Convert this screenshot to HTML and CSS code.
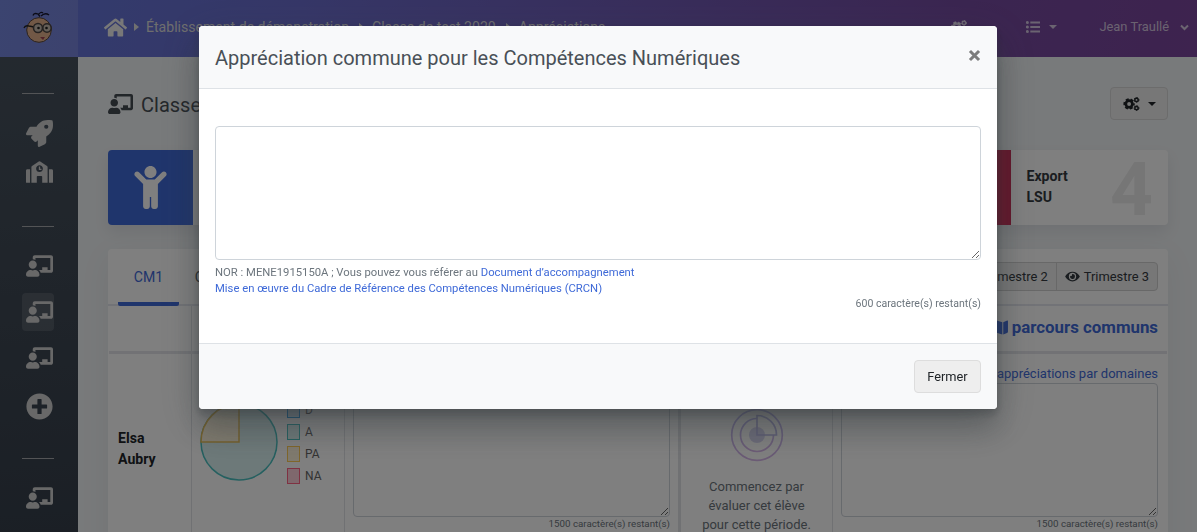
FILE: index.html
```html
<!DOCTYPE html>
<html lang="fr">
<head>
<meta charset="utf-8">
<title>Appréciations</title>
<link rel="stylesheet" href="styles.css">
</head>
<body>
<svg class="sprite" aria-hidden="true">
  <symbol id="teacher" viewBox="0 0 640 512"><path d="M208 352c-2.39 0-4.78.35-7.06 1.09C187.98 357.3 174.35 360 160 360c-14.35 0-27.98-2.7-40.95-6.91-2.28-.74-4.66-1.09-7.05-1.09C49.94 352-.33 402.48 0 464.62.14 490.88 21.73 512 48 512h224c26.27 0 47.86-21.12 48-47.38.33-62.14-49.94-112.62-112-112.62zm-48-32c53.02 0 96-42.98 96-96s-42.98-96-96-96-96 42.98-96 96 42.98 96 96 96zM592 0H208c-26.47 0-48 22.25-48 49.59V96c23.42 0 45.1 6.78 64 17.8V64h352v288h-64v-64H384v64h-76.24c19.1 16.69 33.12 38.73 39.69 64H592c26.47 0 48-22.25 48-49.59V49.59C640 22.25 618.47 0 592 0z"/></symbol>
  <symbol id="rocket" viewBox="0 0 512 512"><path d="M505.12 19.094c-1.19-5.53-6.658-11-12.207-12.188C460.716 0 435.507 0 410.407 0 307.175 0 245.27 55.203 199.052 128H94.838c-16.348.016-35.557 11.875-42.887 26.484L2.516 253.297A28.4 28.4 0 0 0 0 264a24 24 0 0 0 24.006 24h103.81l-22.474 22.469c-11.365 11.36-12.996 32.258 0 45.25l50.904 50.906c11.156 11.188 32.156 13.156 45.277 0l22.475-22.469V488a24 24 0 0 0 24.006 24 28.56 28.56 0 0 0 10.707-2.516l98.728-49.39c14.629-7.297 26.508-26.5 26.508-42.86V312.797c72.598-46.313 128.035-108.406 128.035-211.094.093-25.203.093-50.406-6.862-82.609zM384.04 168A40 40 0 1 1 424.05 128 40.02 40.02 0 0 1 384.04 168z"/></symbol>
  <symbol id="school" viewBox="0 0 640 512"><path d="M0 224v272c0 8.84 7.16 16 16 16h80V192H32c-17.67 0-32 14.33-32 32zm360-48h-24v-40c0-4.42-3.58-8-8-8h-16c-4.42 0-8 3.58-8 8v64c0 4.42 3.58 8 8 8h48c4.42 0 8-3.58 8-8v-16c0-4.42-3.58-8-8-8zm137.75-63.96l-160-106.67a32.02 32.02 0 0 0-35.5 0l-160 106.67A32.002 32.002 0 0 0 128 138.66V512h128V368c0-8.84 7.16-16 16-16h96c8.84 0 16 7.16 16 16v144h128V138.67c0-10.7-5.35-20.7-14.25-26.63zM320 256c-44.18 0-80-35.82-80-80s35.82-80 80-80 80 35.82 80 80-35.82 80-80 80zm288-64h-64v320h80c8.84 0 16-7.16 16-16V224c0-17.67-14.33-32-32-32z"/></symbol>
  <symbol id="plus" viewBox="0 0 512 512"><path d="M256 8C119 8 8 119 8 256s111 248 248 248 248-111 248-248S393 8 256 8zm144 276c0 6.6-5.4 12-12 12h-92v92c0 6.6-5.4 12-12 12h-56c-6.6 0-12-5.4-12-12v-92h-92c-6.6 0-12-5.4-12-12v-56c0-6.6 5.4-12 12-12h92v-92c0-6.6 5.4-12 12-12h56c6.6 0 12 5.4 12 12v92h92c6.6 0 12 5.4 12 12v56z"/></symbol>
  <symbol id="home" viewBox="0 0 576 512"><path d="M280.37 148.26L96 300.11V464a16 16 0 0 0 16 16l112.06-.29a16 16 0 0 0 15.92-16V368a16 16 0 0 1 16-16h64a16 16 0 0 1 16 16v95.64a16 16 0 0 0 16 16.05L464 480a16 16 0 0 0 16-16V300L295.67 148.26a12.19 12.19 0 0 0-15.3 0zM571.6 251.47L488 182.56V44.05a12 12 0 0 0-12-12h-56a12 12 0 0 0-12 12v72.61L318.47 43a48 48 0 0 0-61 0L4.34 251.47a12 12 0 0 0-1.6 16.9l25.5 31A12 12 0 0 0 45.15 301l235.22-193.74a12.19 12.19 0 0 1 15.3 0L530.9 301a12 12 0 0 0 16.9-1.6l25.5-31a12 12 0 0 0-1.7-16.93z"/></symbol>
  <symbol id="child" viewBox="0 0 384 512"><path d="M120 72c0-39.765 32.235-72 72-72s72 32.235 72 72c0 39.764-32.235 72-72 72s-72-32.236-72-72zm254.627 1.373c-12.496-12.497-32.758-12.497-45.254 0L242.745 160H141.254L54.627 73.373c-12.496-12.497-32.758-12.497-45.254 0-12.497 12.497-12.497 32.758 0 45.255L104 213.254V480c0 17.673 14.327 32 32 32h16c17.673 0 32-14.327 32-32V368h16v112c0 17.673 14.327 32 32 32h16c17.673 0 32-14.327 32-32V213.254l94.627-94.627c12.497-12.496 12.497-32.757 0-45.254z"/></symbol>
  <symbol id="eye" viewBox="0 0 576 512"><path d="M572.52 241.4C518.29 135.59 410.93 64 288 64S57.68 135.64 3.48 241.41a32.35 32.35 0 0 0 0 29.19C57.71 376.41 165.07 448 288 448s230.32-71.64 284.52-177.41a32.35 32.35 0 0 0 0-29.19zM288 400a144 144 0 1 1 144-144 143.93 143.93 0 0 1-144 144zm0-240a95.31 95.31 0 0 0-25.31 3.79 47.85 47.85 0 0 1-66.9 66.9A95.78 95.78 0 1 0 288 160z"/></symbol>
  <symbol id="cogs" viewBox="0 0 16 14"><g fill="none" stroke="currentColor"><circle cx="5.6" cy="7" r="3.3" stroke-width="2.700"/><circle cx="5.6" cy="7" r="4.700" stroke-width="2" stroke-dasharray="2.900 2.022" stroke-dashoffset="1.450"/><circle cx="13" cy="2.900" r="1.700" stroke-width="1.500"/><circle cx="13" cy="2.900" r="2.400" stroke-width="1" stroke-dasharray="1.500 1.013"/><circle cx="13" cy="11.100" r="1.700" stroke-width="1.500"/><circle cx="13" cy="11.100" r="2.400" stroke-width="1" stroke-dasharray="1.500 1.013"/></g></symbol>
  <symbol id="list" viewBox="0 0 14 12"><circle cx="1.4" cy="1.5" r="1.5"/><circle cx="1.4" cy="6" r="1.5"/><circle cx="1.4" cy="10.5" r="1.5"/><path d="M4.3.6H14v1.800H4.300zM4.300 5.100H14v1.800H4.300zM4.300 9.600H14v1.800H4.300z"/></symbol>
  <symbol id="map" viewBox="0 0 18 16"><path d="M0 3.600Q0 2.600 1 2.200L5 .5V13.500L.8 15.400Q0 15.600 0 14.800zM6 .5l6 2v13l-6-2zM13 2.500L17.200.600Q18 .4 18 1.200V12.400Q18 13.400 17 13.800L13 15.500z"/></symbol>
</svg>

<div class="app">
  <header class="topbar">
    <div class="brand">
      <svg width="32" height="34" viewBox="0 0 32 34">
        <path d="M10 5.500q1-3 5-1.500l2 2.500M15 5q3-4 5-2M18 6q4-4 8-1" fill="none" stroke="#15152c" stroke-width="1.300"/>
        <circle cx="16" cy="20" r="12.300" fill="#e3b08c" stroke="#56453c" stroke-width="1"/>
        <path d="M1 18q1-3 5-2l5 1" fill="none" stroke="#222" stroke-width="1.300"/>
        <circle cx="15" cy="18" r="4.500" fill="#c8bdb0" stroke="#4c4542" stroke-width="1.600"/>
        <circle cx="24" cy="18" r="4.200" fill="#c8bdb0" stroke="#4c4542" stroke-width="1.600"/>
        <circle cx="15.500" cy="18" r="1.300" fill="#222"/><circle cx="23.500" cy="18" r="1.300" fill="#222"/>
        <path d="M17 27h5l-2 3z" fill="#a14550"/>
      </svg>
    </div>
    <nav class="crumbs">
      <svg class="home"><use href="#home"/></svg><i class="sep"></i><span>Établissement de démonstration</span><i class="sep"></i><span>Classe de test 2020</span><i class="sep"></i><span>Appréciations</span>
    </nav>
    <div class="tools">
      <svg class="cogs"><use href="#cogs"/></svg>
      <svg class="list"><use href="#list"/></svg><i class="caret"></i>
      <span class="user">Jean Traullé</span>
      <svg class="chev" viewBox="0 0 9 7"><path d="M1 1.500l3.500 3.500L8 1.500" fill="none" stroke="currentColor" stroke-width="2"/></svg>
    </div>
  </header>

  <div class="body">
    <aside class="sidebar">
      <hr>
      <a class="side first"><svg class="rocket"><use href="#rocket"/></svg></a>
      <a class="side school"><svg><use href="#school"/></svg></a>
      <hr class="second">
      <a class="side class-a"><svg><use href="#teacher"/></svg></a>
      <a class="side active"><svg><use href="#teacher"/></svg></a>
      <a class="side class-c"><svg><use href="#teacher"/></svg></a>
      <a class="side add"><svg><use href="#plus"/></svg></a>
      <hr class="third">
      <a class="side last"><svg><use href="#teacher"/></svg></a>
    </aside>

    <main class="content">
      <div class="title">
        <svg><use href="#teacher"/></svg>
        <h1>Classe de test</h1>
        <button class="gear"><svg class="cogs"><use href="#cogs"/></svg><i class="caret"></i></button>
      </div>

      <div class="steps">
        <div class="step"><div class="step-icon blue"><svg><use href="#child"/></svg></div></div>
        <div class="step export"><div class="step-icon red"></div><strong>Export<br>LSU</strong><b class="num">4</b></div>
      </div>

      <section class="panel">
        <div class="tabs">
          <a class="tab on">CM1</a><a class="tab">CM2</a>
          <div class="group"><span>Trimestre 2</span><span><svg><use href="#eye"/></svg>Trimestre 3</span></div>
        </div>
        <div class="grid head">
          <div></div><div></div><div></div><div></div>
          <div class="common"><svg><use href="#map"/></svg>parcours communs</div>
        </div>
        <div class="grid row">
          <div class="name">Elsa<br>Aubry</div>
          <div class="chart">
            <svg width="78" height="80" viewBox="0 0 78 80"><circle cx="39" cy="40" r="38" fill="#dbf2f2" stroke="#4bc0c0" stroke-width="1.500"/><path d="M39 40V2A38 38 0 0 0 1 40z" fill="#fff5dd" stroke="#e8bf58" stroke-width="1.500"/></svg>
            <ul><li class="d">D</li><li class="a">A</li><li class="pa">PA</li><li class="na">NA</li></ul>
          </div>
          <div class="entry"><span class="link">&nbsp;</span><textarea></textarea><small>1500 caractère(s) restant(s)</small></div>
          <div class="empty">
            <svg width="54" height="54" viewBox="0 0 54 54"><defs><linearGradient id="violet" x1="0" y1="0" x2="0" y2="1"><stop stop-color="#bdbbf0"/><stop offset="1" stop-color="#d7b6ea"/></linearGradient></defs><g fill="none" stroke-width="1.700"><circle cx="27" cy="27" r="8" fill="#d6d5f0"/><circle cx="27" cy="27" r="25.300" stroke="url(#violet)"/><path d="M27 10.500A16.500 16.500 0 1 0 43.500 27" stroke="url(#violet)"/><path d="M27 7.500V27H46.500A19.500 19.500 0 0 0 27 7.500z" stroke="#bdbbe8"/></g></svg>
            <p>Commencez par<br>évaluer cet élève<br>pour cette période.</p>
          </div>
          <div class="entry"><span class="link">appréciations par domaines</span><textarea></textarea><small>1500 caractère(s) restant(s)</small></div>
        </div>
      </section>
    </main>
  </div>
</div>

<div class="backdrop"></div>
<div class="modal" role="dialog">
  <div class="modal-head"><h2>Appréciation commune pour les Compétences Numériques</h2><svg class="close" viewBox="0 0 12 12"><path d="M1.800 1.800l8.400 8.400M10.200 1.800l-8.400 8.400" stroke="currentColor" stroke-width="2.800"/></svg></div>
  <div class="modal-body">
    <textarea></textarea>
    <p class="help">NOR : MENE1915150A ; Vous pouvez vous référer au <a>Document d’accompagnement</a><br><a>Mise en œuvre du Cadre de Référence des Compétences Numériques (CRCN)</a></p>
    <p class="count">600 caractère(s) restant(s)</p>
  </div>
  <div class="modal-foot"><button>Fermer</button></div>
</div>
</body>
</html>
```
FILE: styles.css
```css
* { box-sizing: border-box; }
html, body { margin: 0; height: 100%; overflow: hidden; }
body { font: 14.08px/1.5 Roboto, sans-serif; color: #495057; }
svg { fill: currentColor; flex: none; }
.sprite { position: absolute; width: 0; height: 0; }
h1, h2, p, ul { margin: 0; padding: 0; font-weight: 400; }
ul { list-style: none; }
textarea { display: block; width: 100%; border: 1px solid #ced4da; border-radius: 4px; background: #fff; resize: vertical; }
.caret { border: 4px solid transparent; border-top-color: currentColor; border-bottom: 0; }

.app { height: 532px; overflow: hidden; display: flex; flex-direction: column; background: #f1f4f6; }
.topbar { flex: none; height: 57px; display: flex; align-items: center; color: rgba(255,255,255,.7); background: linear-gradient(105deg, #6478dc 0%, #6c6ed0 25%, #764ba2 80%, #7c469e 100%); }
.brand { width: 78px; height: 57px; padding: 10px 0 0 23px; background: rgba(255,255,255,.12); }
.crumbs { display: flex; align-items: center; flex: 1; padding-left: 26px; padding-bottom: 2px; color: #ddd; }
.home { width: 23px; height: 21px; margin-right: 7px; color: #f0f0f0; }
.sep { border: 4.500px solid transparent; border-left: 5px solid #e0e0e0; border-right: 0; margin: 0 8px 0 10px; }
.home + .sep { margin: 0 7px 0 0; }
.tools { display: flex; align-items: center; height: 100%; padding: 0 8px 3px 0; }
.tools .cogs { width: 16px; height: 14px; margin-right: 59px; }
.list { width: 14px; height: 12px; margin-right: 9px; }
.user { margin: 0 11px 0 42px; font-size: 12.900px; }
.chev { width: 9px; height: 7px; }

.body { flex: 1; display: flex; min-height: 0; }
.sidebar { flex: none; width: 78px; padding-top: 36px; display: flex; flex-direction: column; color: #d0d0d0; background: linear-gradient(175deg, #48535f, #363f4b 100%); }
.sidebar hr { width: 32px; height: 1px; margin: 0 0 0 22px; border: 0; background: #a6a9ad; flex: none; }
.side { flex: none; width: 32px; height: 38px; margin-left: 22px; border-radius: 4px; display: flex; align-items: center; justify-content: flex-end; padding-right: 1px; }
.side svg { width: 27px; height: 22px; }
.side .rocket, .side.add svg { width: 27px; height: 27px; }
.side.first { margin-top: 20px; }
.side.school { margin-top: 1px; }
.sidebar .second { margin-top: 35px; }
.class-a { margin-top: 20px; }
.side.active { margin-top: 8px; background: rgba(255,255,255,.12); }
.class-c { margin-top: 8px; }
.add { margin-top: 10px; }
.sidebar .third { margin-top: 33px; }
.last { margin-top: 20px; }

.content { flex: 1; padding: 30px 29px 0 30px; }
.title { display: flex; align-items: center; height: 33px; }
.title > svg { width: 25px; height: 20px; color: #454c53; }
.title h1 { flex: 1; margin-left: 8px; padding-top: 2px; font-size: 20px; line-height: 34px; color: #495057; }
.gear { width: 58px; height: 33px; border: 1px solid #d8d8d8; border-radius: 4px; background: #eee; color: #212529; display: flex; align-items: center; justify-content: center; gap: 8px; padding: 0; }
.gear .cogs { width: 17px; height: 14px; }
.steps { display: flex; justify-content: space-between; margin-top: 30px; }
.step { width: 250px; height: 75px; background: #fff; border-radius: 4px; overflow: hidden; display: flex; align-items: center; box-shadow: 0 7px 15px rgba(8,10,37,.08); }
.step-icon { width: 85px; height: 75px; display: flex; align-items: center; justify-content: center; color: #fff; }
.step-icon svg { width: 33px; height: 43px; }
.blue { background: #3f6ad8; }
.red { width: 93px; background: #c92c56; }
.step strong { margin-left: 15.500px; padding-bottom: 2px; line-height: 21px; color: #343a40; flex: 1; }
.num { font-size: 75px; line-height: 75px; color: #ededed; margin: 4px 15px 0 0; }

.panel { margin-top: 24px; background: #fff; border-radius: 4px; height: 400px; box-shadow: 0 7px 34px rgba(4,9,20,.05); }
.tabs { height: 57px; display: flex; align-items: stretch; padding-left: 10px; border-bottom: 2px solid #e4e6ee; }
.tab { width: 61px; margin-bottom: -2px; line-height: 57px; text-align: center; color: #495057; }
.tab.on { color: #3f6ad8; border-bottom: 4px solid #3f6ad8; border-radius: 2px; }
.group { margin: 13px 10px 0 auto; height: 29px; display: flex; border: 1px solid #d0d0d0; border-radius: 4px; background: #eee; color: #343a40; font-size: 12.900px; line-height: 27px; overflow: hidden; }
.group span { display: flex; align-items: center; padding: 0 8px; }
.group span + span { border-left: 1px solid #d0d0d0; }
.group svg { width: 15px; height: 13px; margin-right: 4px; }
.grid { display: grid; margin: 0 1px; grid-template-columns: 83px 153px 336px 152px 1fr; }
.grid > div { border-right: 1px solid #e0e2e6; }
.grid > div:nth-child(3) { border-right: 3px solid #e0e2e6; }
.grid > div:last-child { border-right: 0; }
.head { height: 48px; border-bottom: 3px solid #e4e5ea; }
.common { display: flex; align-items: center; justify-content: flex-end; gap: 4px; padding: 0 9px 2px 0; color: #3f6ad8; font-weight: 700; font-size: 16.850px; }
.common svg { width: 17px; height: 15px; }
.row { height: 240px; }
.name { padding: 74px 9px; font-weight: 700; line-height: 21px; color: #212529; }
.chart { display: flex; padding: 48px 0 0 9px; }
.chart > svg { margin-left: -1px; }
.chart ul { margin: -3px 0 0 9px; font: 12px/22px Roboto, sans-serif; color: #666; }
.chart li { display: flex; align-items: center; gap: 5px; height: 22px; padding-bottom: 1px; }
.chart li::before { content: ""; width: 11px; height: 14px; border: 1.500px solid; }
.chart .d::before { border-color: #36a2eb; background: #d7ecfb; }
.chart .a::before { border-color: #4bc0c0; background: #dbf2f2; }
.chart .pa::before { border-color: #ffcd56; background: #fff5dd; }
.chart .na::before { border-color: #ff6384; background: #ffd0da; }
.entry { padding: 9px 8px; text-align: right; }
.entry:last-child { padding-right: 9px; }
.entry .link { display: block; height: 20px; line-height: 22px; font-size: 13px; color: #3f6ad8; white-space: nowrap; }
.entry textarea { height: 134px; border-color: #ced4da; }
.entry small { display: block; line-height: 14px; font-size: 9.750px; color: #6c757d; }
.empty { padding-top: 54px; text-align: center; }
.empty svg { display: block; margin: 0 auto; }
.empty p { margin-top: 15px; font-size: 13px; line-height: 19px; color: #6c757d; }

.backdrop { position: fixed; inset: 0; background: rgba(0,0,0,.5); }
.modal { position: fixed; left: 199px; top: 26px; width: 798px; height: 383px; background: #fff; border-radius: 4px; overflow: hidden; display: flex; flex-direction: column; box-shadow: 0 12px 40px rgba(52,58,64,.3), 0 21px 27px rgba(52,58,64,.3), 0 9px 8px rgba(0,0,0,.05), 0 4px 7px rgba(52,58,64,.3); }
.modal-head { height: 63px; padding: 0 16px; display: flex; align-items: center; justify-content: space-between; background: #f8f9fa; border-bottom: 1px solid #dee2e6; }
.modal-head h2 { padding-top: 2px; font-size: 20px; line-height: 30px; }
.close { width: 13px; height: 13px; margin-bottom: 4px; color: #7c7c7c; }
.modal-body { flex: 1; padding: 37px 16px 0; }
.modal-body textarea { height: 134px; }
.help { margin-top: 5px; font-size: 11.270px; line-height: 16px; color: #6c757d; }
.help a { color: #3f6ad8; }
.count { margin-top: -1px; text-align: right; font-size: 10.560px; line-height: 15px; color: #6c757d; }
.modal-foot { height: 66px; padding: 0 16px; display: flex; align-items: center; justify-content: flex-end; background: #f8f9fa; border-top: 1px solid #dee2e6; }
.modal-foot button { width: 67px; height: 33px; padding: 0; border: 1px solid #ddd; border-radius: 4px; background: #eee; color: #212529; font: 12.800px Roboto, sans-serif; }
```
